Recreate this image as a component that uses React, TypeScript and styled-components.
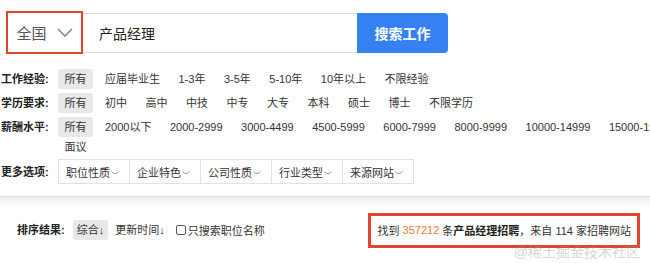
import React from "react";
import styled, { createGlobalStyle } from "styled-components";

const FONT = `"Liberation Sans", "Noto Sans CJK SC", sans-serif`;

const Global = createGlobalStyle`
  html, body { margin: 0; padding: 0; background: #fff; overflow: hidden; }
  body { font-family: ${FONT}; color: #333; }
  * { box-sizing: border-box; }
`;

const Page = styled.div`
  position: relative;
  width: 650px;
  height: 263px;
  overflow: hidden;
`;

const SearchBar = styled.div`
  display: flex;
  align-items: center;
  margin: 11px 0 0 6px;
`;

const CityBox = styled.div`
  width: 77px;
  height: 43px;
  border: 2.5px solid #e4432d;
  display: flex;
  align-items: center;
  padding-left: 8.5px;
  gap: 10px;
  font-size: 15px;
  color: #555;
`;

const Chevron = styled.svg`
  display: block;
`;

const Input = styled.div`
  width: 274px;
  height: 40px;
  border-top: 1px solid #dcdcdc;
  border-bottom: 1px solid #dcdcdc;
  display: flex;
  align-items: center;
  padding-left: 16px;
  font-size: 14px;
  color: #222;
`;

const SearchButton = styled.div`
  width: 91px;
  height: 40px;
  background: #3581f3;
  border-radius: 0 4px 4px 0;
  color: #fff;
  font-size: 14px;
  font-weight: bold;
  display: flex;
  align-items: center;
  justify-content: center;
`;

const Filters = styled.div`
  width: 700px;
  margin-top: 13px;
`;

const Row = styled.div<{ $center?: boolean }>`
  display: flex;
  align-items: ${(p) => (p.$center ? "center" : "flex-start")};
  padding: ${(p) => (p.$center ? "0" : "2px 0")};
`;

const Label = styled.div`
  width: 58px;
  flex: none;
  padding-left: 1px;
  font-size: 11px;
  font-weight: bold;
  line-height: 20px;
  color: #222;
  white-space: nowrap;
`;

const Options = styled.div`
  flex: 1;
  display: flex;
  flex-wrap: wrap;
`;

const Option = styled.span<{ $active?: boolean }>`
  padding: 0 6.5px;
  margin-right: 5.5px;
  line-height: 20px;
  font-size: 11px;
  color: #333;
  border-radius: 3px;
  white-space: nowrap;
  background: ${(p) => (p.$active ? "#e8e8e8" : "transparent")};
`;

const DropGroup = styled.div`
  display: flex;
`;

const Drop = styled.div`
  height: 25px;
  border: 1px solid #e2e2e2;
  margin-right: -1px;
  padding: 0 10px 0 7px;
  display: flex;
  align-items: center;
  gap: 1px;
  font-size: 11px;
  color: #333;
  white-space: nowrap;
`;

const SmallChevron = styled.svg`
  display: block;
  margin-top: 4px;
`;

const BottomBar = styled.div`
  margin-top: 12px;
  height: 67px;
  border-top: 1px solid #dedede;
  background: linear-gradient(#efefef, #fff 10px);
  display: flex;
  align-items: center;
  justify-content: space-between;
  padding: 0 10px 0 17px;
`;

const SortGroup = styled.div`
  display: flex;
  align-items: center;
  font-size: 11px;
  color: #333;
`;

const SortLabel = styled.span`
  font-weight: bold;
  color: #222;
  margin-right: 8px;
  line-height: 20px;
`;

const SortItem = styled.span<{ $active?: boolean }>`
  padding: 0 4px;
  margin-right: 3px;
  line-height: 20px;
  border-radius: 3px;
  background: ${(p) => (p.$active ? "#e8e8e8" : "transparent")};
`;

const CheckLabel = styled.label`
  display: flex;
  align-items: center;
  margin-left: 4px;
  gap: 2px;
`;

const CheckBox = styled.span`
  width: 10px;
  height: 10px;
  border: 1px solid #555;
  border-radius: 2px;
  background: #fff;
`;

const ResultBox = styled.div`
  height: 35px;
  border: 3px solid #e4432d;
  padding: 0 6px 0 7px;
  display: flex;
  align-items: center;
  font-size: 11px;
  color: #333;
  white-space: pre;
`;

const Count = styled.span`
  color: #e8803a;
`;

const Strong = styled.span`
  font-weight: bold;
  color: #222;
`;

const Watermark = styled.div`
  position: absolute;
  right: 10px;
  bottom: 2px;
  font-size: 14px;
  color: rgba(150, 150, 150, 0.4);
  white-space: nowrap;
`;

const filterRows = [
  { label: "工作经验:", items: ["所有", "应届毕业生", "1-3年", "3-5年", "5-10年", "10年以上", "不限经验"] },
  { label: "学历要求:", items: ["所有", "初中", "高中", "中技", "中专", "大专", "本科", "硕士", "博士", "不限学历"] },
  {
    label: "薪酬水平:",
    items: ["所有", "2000以下", "2000-2999", "3000-4499", "4500-5999", "6000-7999", "8000-9999", "10000-14999", "15000-19999", "面议"],
  },
];

const drops = ["职位性质", "企业特色", "公司性质", "行业类型", "来源网站"];

export default function App() {
  return (
    <Page>
      <Global />
      <SearchBar>
        <CityBox>
          <span>全国</span>
          <Chevron width="16" height="9" viewBox="0 0 16 9">
            <path d="M1 1 L8 8 L15 1" fill="none" stroke="#888" strokeWidth="1.6" />
          </Chevron>
        </CityBox>
        <Input>产品经理</Input>
        <SearchButton>搜索工作</SearchButton>
      </SearchBar>

      <Filters>
        {filterRows.map((row) => (
          <Row key={row.label}>
            <Label>{row.label}</Label>
            <Options>
              {row.items.map((it, i) => (
                <Option key={it} $active={i === 0}>
                  {it}
                </Option>
              ))}
            </Options>
          </Row>
        ))}
        <Row $center>
          <Label>更多选项:</Label>
          <DropGroup>
            {drops.map((d) => (
              <Drop key={d}>
                {d}
                <SmallChevron width="8" height="5" viewBox="0 0 8 5">
                  <path d="M0.5 0.5 Q4 5 7.5 0.5" fill="none" stroke="#999" strokeWidth="1" />
                </SmallChevron>
              </Drop>
            ))}
          </DropGroup>
        </Row>
      </Filters>

      <BottomBar>
        <SortGroup>
          <SortLabel>排序结果:</SortLabel>
          <SortItem $active>综合↓</SortItem>
          <SortItem>更新时间↓</SortItem>
          <CheckLabel>
            <CheckBox />
            只搜索职位名称
          </CheckLabel>
        </SortGroup>
        <ResultBox>
          找到 <Count>357212</Count> 条<Strong>产品经理招聘</Strong>，来自 114 家招聘网站
        </ResultBox>
      </BottomBar>
      <Watermark>@稀土掘金技术社区</Watermark>
    </Page>
  );
}
